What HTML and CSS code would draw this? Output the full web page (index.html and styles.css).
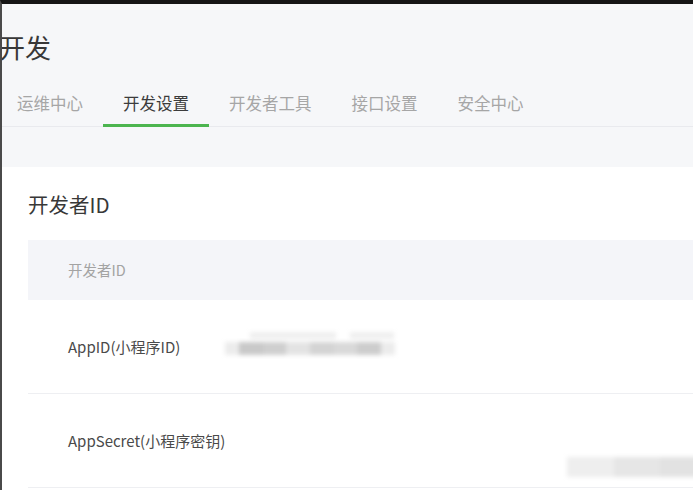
FILE: index.html
```html
<!DOCTYPE html>
<html lang="zh-CN">
<head>
<meta charset="utf-8">
<title>开发</title>
<link rel="stylesheet" href="styles.css">
</head>
<body>
<div class="frame">
  <div class="page-head">
    <h1 class="title">开发</h1>
    <nav class="tabs">
      <span class="tab">运维中心</span>
      <span class="tab active">开发设置</span>
      <span class="tab">开发者工具</span>
      <span class="tab">接口设置</span>
      <span class="tab">安全中心</span>
    </nav>
  </div>
  <section class="card">
    <h2 class="card-title">开发者ID</h2>
    <div class="table">
      <div class="thead">开发者ID</div>
      <div class="row">
        <span class="label">AppID(小程序ID)</span>
        <span class="masked">
          <span class="mask-top"><i class="m1"></i><i class="m2"></i></span>
          <span class="mask-bottom"><i></i><i></i><i></i><i></i><i></i><i></i><i></i><i></i></span>
        </span>
      </div>
      <div class="row">
        <span class="label">AppSecret(小程序密钥)</span>
      </div>
    </div>
    <div class="watermark"><i></i><i></i><i></i></div>
  </section>
</div>
</body>
</html>
```
FILE: styles.css
```css
html, body {
  margin: 0;
  padding: 0;
  background: #ffffff;
}
body {
  width: 700px;
  height: 490px;
  overflow: hidden;
  font-family: "Noto Sans CJK SC", "Noto Sans", sans-serif;
  color: #353535;
}
.frame {
  width: 691px;
  height: 486px;
  border-top: 4px solid #151515;
  border-left: 2px solid #4a4a4a;
  display: flex;
  flex-direction: column;
  overflow: hidden;
}
.page-head {
  background: #f6f7f9;
  height: 163px;
  flex: none;
  display: flex;
  flex-direction: column;
}
.title {
  margin: 25px 0 0 -3px;
  font-size: 26px;
  line-height: 36px;
  font-weight: 400;
  color: #383838;
}
.tabs {
  margin-top: 17px;
  border-bottom: 1px solid #e9eaee;
  display: flex;
}
.tab {
  padding: 0 20px;
  font-size: 16.5px;
  line-height: 42px;
  color: #a6a6a6;
  border-bottom: 3px solid transparent;
  margin-bottom: -1px;
  white-space: nowrap;
}
.tab:first-child {
  margin-left: -5px;
}
.tab.active {
  color: #3c3c3c;
  border-bottom-color: #4cb54f;
}
.card {
  position: relative;
  flex: 1;
  background: #ffffff;
  padding: 23px 0 0 26px;
}
.card-title {
  margin: 0;
  font-size: 20.5px;
  line-height: 28px;
  font-weight: 400;
  color: #383838;
}
.table {
  margin-top: 22px;
}
.thead {
  height: 60px;
  line-height: 60px;
  background: #f4f5f9;
  padding-left: 40px;
  font-size: 14.5px;
  color: #a3a3a3;
}
.row {
  height: 93px;
  border-bottom: 1px solid #eeeff2;
  display: flex;
  align-items: center;
  padding-left: 40px;
  font-size: 15px;
  color: #4a4a4a;
}
.label {
  width: 157px;
  flex: none;
  white-space: nowrap;
}
.masked {
  display: flex;
  flex-direction: column;
  gap: 3px;
  filter: blur(2px);
  margin-top: -6px;
}
.mask-top {
  display: flex;
  gap: 14px;
  margin-left: 25px;
}
.mask-top i {
  display: block;
  height: 7px;
  background: #efefef;
}
.mask-top .m1 { width: 86px; }
.mask-top .m2 { width: 44px; }
.mask-bottom {
  display: flex;
  width: 170px;
  height: 13px;
}
.mask-bottom i {
  display: block;
  flex: 1;
  background: #dadada;
}
.mask-bottom i:nth-child(1) { background: #ececec; flex: 0.6; }
.mask-bottom i:nth-child(2) { background: #c9c9c9; }
.mask-bottom i:nth-child(3) { background: #cfcfcf; }
.mask-bottom i:nth-child(4) { background: #e3e3e3; }
.mask-bottom i:nth-child(5) { background: #d4d4d4; }
.mask-bottom i:nth-child(6) { background: #d9d9d9; }
.mask-bottom i:nth-child(7) { background: #cdcdcd; }
.mask-bottom i:nth-child(8) { background: #ececec; flex: 0.6; }
.watermark {
  position: absolute;
  left: 565px;
  top: 290px;
  width: 140px;
  height: 20px;
  display: flex;
  filter: blur(2px);
}
.watermark i {
  display: block;
  flex: 1;
  background: #eeeeee;
}
.watermark i:nth-child(2) { background: #e6e6e6; }
.watermark i:nth-child(3) { background: #e2e2e2; }
```
